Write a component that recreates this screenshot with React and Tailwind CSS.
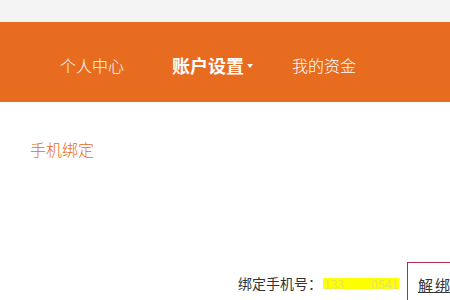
import React from 'react';

const font = { fontFamily: '"Noto Sans CJK SC", "Microsoft YaHei", sans-serif' };

const NavBar = () => (
  <div className="h-[80px] bg-[#e86c20] flex items-center pt-[6px] text-white">
    <span className="ml-[60px] text-[16px] font-light">个人中心</span>
    <span className="ml-[48px] text-[18px] font-bold flex items-center">
      账户设置
      <span className="ml-[3px] mt-[2px] border-l-[3px] border-r-[3px] border-t-[4px] border-l-transparent border-r-transparent border-t-white" />
    </span>
    <span className="ml-[39px] text-[16px] font-light">我的资金</span>
  </div>
);

export default function App() {
  return (
    <div className="w-[450px] h-[300px] overflow-hidden bg-white" style={font}>
      <div className="h-[22px] bg-[#f4f4f4]" />
      <NavBar />
      <div className="pt-[36px] pl-[30px] text-[16px] text-[#e86c20] font-light leading-[22px]">手机绑定</div>
      <div className="mt-[102px] flex items-start whitespace-nowrap">
        <div className="ml-[238px] mt-[11px] flex items-center shrink-0 text-[14px] text-[#333] leading-[20px]">
          <span>绑定手机号：</span>
          <span className="ml-[1px] bg-[#ffff00] text-[#e6e66a] text-[12px] leading-[11px] w-[76px] flex justify-between px-[1px]">
            <span>133</span>
            <span>0541</span>
          </span>
        </div>
        <div className="ml-[8px] border border-[#a8304e] h-[60px] pl-[10px] pt-[9px] flex-1 shrink-0">
          <span className="text-[15px] text-[#333] underline tracking-[2px]">解绑</span>
        </div>
      </div>
    </div>
  );
}
